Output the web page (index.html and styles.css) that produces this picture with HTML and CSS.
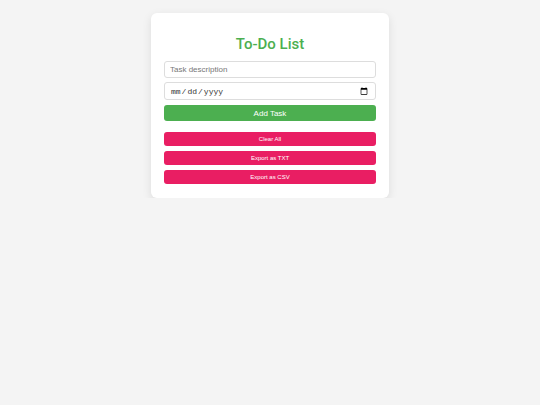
FILE: index.html
```html
<!DOCTYPE html>
<html lang="en">
<head>
  <meta charset="UTF-8">
  <meta name="viewport" content="width=device-width, initial-scale=1.0">
  <title>To-Do List</title>
  <link rel="stylesheet" href="styles.css">
</head>
<body>
  <div class="container">
    <h1>To-Do List</h1>
    <form id="task-form" class="task-form">
      <input type="text" id="task-input" class="field" placeholder="Task description">
      <input type="date" id="task-date" class="field date-field">
      <button type="submit" class="add-btn">Add Task</button>
    </form>
    <ul id="task-list" class="task-list"></ul>
    <div class="actions">
      <button type="button" class="action-btn">Clear All</button>
      <button type="button" class="action-btn">Export as TXT</button>
      <button type="button" class="action-btn">Export as CSV</button>
    </div>
  </div>
</body>
</html>
```

FILE: styles.css
```css
/* Page */
body {
  font-family: "Liberation Sans", Arial, sans-serif;
  margin: 0;
  padding-top: 13px;
  background-color: #f4f4f4;
}

/* Card */
.container {
  width: 238px;
  margin: 0 auto;
  padding: 13px 13px 14px;
  box-sizing: border-box;
  background-color: #fff;
  border-radius: 6px;
  box-shadow: 0 3px 10px rgba(0, 0, 0, 0.1);
}

h1 {
  margin: 8px 0 7px;
  font-family: Roboto, "Liberation Sans", sans-serif;
  font-size: 15px;
  font-weight: 500;
  line-height: 20px;
  text-align: center;
  color: #4caf50;
}

/* Form */
.task-form {
  display: flex;
  flex-direction: column;
}

.field {
  height: 17px;
  margin: 0 0 4px;
  padding: 0 5px;
  border: 1px solid #ddd;
  border-radius: 3px;
  box-sizing: border-box;
  font-family: "Liberation Sans", Arial, sans-serif;
  font-size: 8px;
  color: #333;
  outline: none;
}

.field::placeholder {
  color: #777;
}

.date-field {
  height: 18px;
  margin-bottom: 5px;
  font-family: "Liberation Mono", monospace;
  font-size: 8px;
  color: #333;
}

.add-btn {
  height: 16px;
  padding: 0;
  border: none;
  border-radius: 3px;
  background-color: #4caf50;
  color: #fff;
  font-family: "Liberation Sans", Arial, sans-serif;
  font-size: 8px;
  cursor: pointer;
}

.task-list {
  list-style: none;
  margin: 0;
  padding: 0;
}

/* Action buttons */
.actions {
  display: flex;
  flex-direction: column;
  gap: 5px;
  margin-top: 11px;
}

.action-btn {
  height: 14px;
  padding: 0;
  border: none;
  border-radius: 3px;
  background-color: #e91e63;
  color: #fff;
  font-family: "Liberation Sans", Arial, sans-serif;
  font-size: 6px;
  cursor: pointer;
}
```
